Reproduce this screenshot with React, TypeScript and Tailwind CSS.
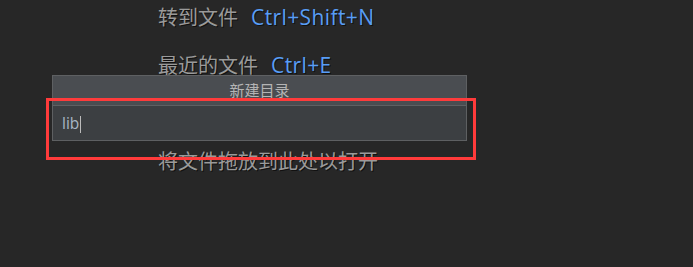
import React from 'react';

const FONT = { fontFamily: "'Open Sans', 'Noto Sans CJK SC', sans-serif" };

const rows: { label: string; keys?: string }[] = [
  { label: '转到文件', keys: 'Ctrl+Shift+N' },
  { label: '最近的文件', keys: 'Ctrl+E' },
  { label: '导航栏', keys: 'Alt+Home' },
  { label: '将文件拖放到此处以打开' },
];

export default function App() {
  return (
    <div className="relative w-[693px] h-[267px] overflow-hidden bg-[#272727]" style={FONT}>
      {/* Empty editor hints */}
      <div className="flex flex-col gap-[12px] pl-[158px]">
        {rows.map(r => (
          <div key={r.label} className="flex items-center h-[36px] text-[20px] [text-shadow:1px_1px_0_#111]">
            <span className="text-[#9a9a9a]">{r.label}</span>
            {r.keys && <span className="ml-[13px] text-[21px] tracking-[0.4px] text-[#589df6]">{r.keys}</span>}
          </div>
        ))}
      </div>

      {/* New directory popup */}
      <div className="absolute left-[52px] top-[75px] w-[415px] border border-[#5e6062] bg-[#3c3f42]">
        <div className="flex items-center justify-center h-[30px] bg-[#4a4d51] border-b border-[#5e6062] text-[15px] text-[#b4b4b4]">
          新建目录
        </div>
        <div className="flex items-center h-[34px] pl-[9px]">
          <span className="text-[15.5px] text-[#a9b7c6] pt-[2px]">lib</span>
          <span className="ml-[1px] mt-[2px] w-px h-[17px] bg-[#bbbbbb]" />
        </div>
      </div>

      {/* Highlight frame */}
      <div className="absolute left-[46px] top-[98px] w-[430px] h-[62px] border-[3px] border-[#ff3b3b]" />
    </div>
  );
}
